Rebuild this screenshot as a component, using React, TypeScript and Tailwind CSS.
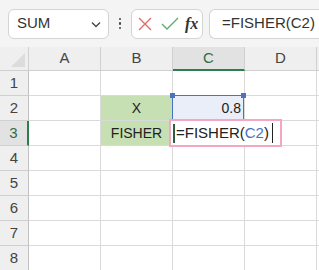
import React from 'react'

const cols = ['A', 'B', 'C', 'D']
const rows = [1, 2, 3, 4, 5, 6, 7, 8]

function Cell({ r, c }: { r: number; c: string }) {
  const base =
    'h-[25px] border-r border-b border-[#dadada] flex items-center text-[14px] text-[#222]'
  if (c === 'B' && r === 2)
    return <div className={`${base} bg-[#c6e0b4] justify-center`}>X</div>
  if (c === 'B' && r === 3)
    return <div className={`${base} bg-[#c6e0b4] justify-center`}>FISHER</div>
  if (c === 'C' && r === 2)
    return (
      <div className={`${base} relative bg-[#e9eef8] justify-end pr-[3px]`}>
        <div className="absolute -left-px -top-px right-0 bottom-0 border-[1.5px] border-[#4a72c4]" />
        <span className="absolute -left-[3px] -top-[3px] w-[5px] h-[5px] bg-[#4a72c4]" />
        <span className="absolute -right-[2px] -top-[3px] w-[5px] h-[5px] bg-[#4a72c4]" />
        <span className="relative">0.8</span>
      </div>
    )
  if (c === 'C' && r === 3)
    return (
      <div className={`${base} relative overflow-visible`}>
        <div className="absolute -left-[4px] -top-[2px] w-[113px] h-[28px] border-2 border-[#f2a7c3] bg-white z-10 flex items-center pl-[2px]">
          <span className="w-[2px] h-[19px] bg-[#2f5f3f] mr-[1px]" />
          <span className="text-[15px] text-[#222]">
            =FISHER(<span className="text-[#4a72c4]">C2</span>)
          </span>
          <span className="w-px h-[20px] bg-[#222] ml-[3px]" />
        </div>
      </div>
    )
  return <div className={base} />
}

export default function App() {
  return (
    <div
      className="w-[319px] h-[270px] overflow-hidden bg-white"
      style={{ fontFamily: '"Liberation Sans", Arial, sans-serif' }}
    >
      <div className="h-[47px] bg-[#f4f4f4] flex items-center pl-[8px]">
        <div className="w-[101px] h-[30px] bg-white border border-[#d4d4d4] rounded-[6px] flex items-center justify-between pl-[8px] pr-[6px]">
          <span className="text-[15px] text-[#333]">SUM</span>
          <svg width="12" height="12" viewBox="0 0 12 12" fill="none" stroke="#444" strokeWidth="1.3">
            <path d="M2 4.5l4 4 4-4" />
          </svg>
        </div>
        <div className="w-[22px] flex flex-col items-center gap-[2px]">
          <span className="w-[2.5px] h-[2.5px] bg-[#444] rounded-full" />
          <span className="w-[2.5px] h-[2.5px] bg-[#444] rounded-full" />
          <span className="w-[2.5px] h-[2.5px] bg-[#444] rounded-full" />
        </div>
        <div className="w-[72px] h-[30px] bg-white border border-[#d4d4d4] rounded-[6px] flex items-center pl-[5px]">
          <svg width="16" height="16" viewBox="0 0 16 16" fill="none" stroke="#e06c6c" strokeWidth="1.4">
            <path d="M2 2l12 12M14 2L2 14" />
          </svg>
          <svg className="ml-[8px]" width="18" height="14" viewBox="0 0 18 14" fill="none" stroke="#5fae6e" strokeWidth="1.4">
            <path d="M1 7l5 5L17 1" />
          </svg>
          <span
            className="ml-[6px] text-[16px] text-[#333] italic font-bold"
            style={{ fontFamily: '"Liberation Serif", serif' }}
          >
            fx
          </span>
        </div>
        <div className="ml-[6px] flex-1 h-[30px] bg-white border border-[#d4d4d4] border-r-0 rounded-l-[6px] flex items-center pl-[12px]">
          <span className="text-[15px] text-[#333]">=FISHER(C2)</span>
        </div>
      </div>
      <div className="grid grid-cols-[29px_72px_72px_72px_72px_1fr]">
        <div className="h-[24px] bg-[#efefef] border-r border-b border-[#d0d0d0] relative">
          <svg className="absolute right-[3px] bottom-[3px]" width="14" height="14" viewBox="0 0 14 14">
            <path d="M14 0V14H0Z" fill="#dcdcdc" />
          </svg>
        </div>
        {cols.map((c) => (
          <div
            key={c}
            className={
              c === 'C'
                ? 'h-[24px] bg-[#e2e2e2] border-r border-[#d0d0d0] border-b-2 border-b-[#2e7d4f] flex items-center justify-center text-[15px] text-[#2e6e46]'
                : 'h-[24px] bg-[#efefef] border-r border-b border-[#d0d0d0] flex items-center justify-center text-[15px] text-[#444]'
            }
          >
            {c}
          </div>
        ))}
        <div className="h-[24px] bg-[#efefef] border-b border-[#d0d0d0]" />
        {rows.map((r) => (
          <React.Fragment key={r}>
            <div
              className={
                r === 3
                  ? 'h-[25px] bg-[#e2e2e2] border-r-2 border-r-[#2e7d4f] border-b border-[#d0d0d0] flex items-center justify-center text-[15px] text-[#2e6e46]'
                  : 'h-[25px] bg-[#efefef] border-r border-b border-[#d0d0d0] border-r-[#c0c0c0] flex items-center justify-center text-[15px] text-[#444]'
              }
            >
              {r}
            </div>
            {cols.map((c) => (
              <Cell key={c} r={r} c={c} />
            ))}
            <div className="h-[25px] border-b border-[#dadada]" />
          </React.Fragment>
        ))}
      </div>
    </div>
  )
}
